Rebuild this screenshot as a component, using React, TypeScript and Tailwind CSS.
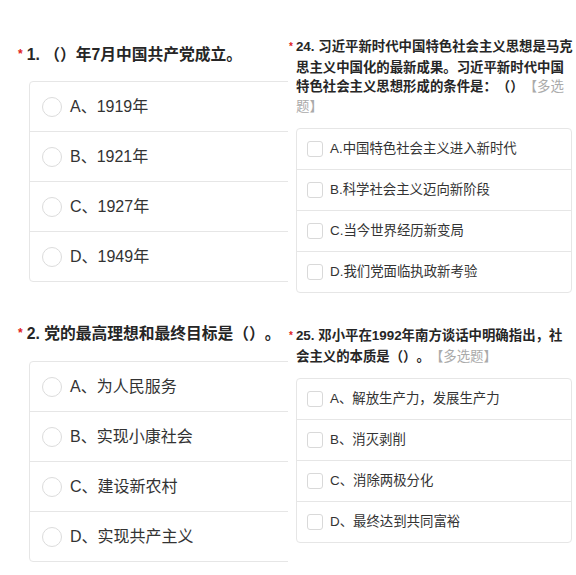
import React from 'react';

const FONT = '"Liberation Sans", "Noto Sans CJK SC", sans-serif';

interface Question {
  no: string;
  title: React.ReactNode;
  options: string[];
}

const left: Question[] = [
  {
    no: '1.',
    title: '（）年7月中国共产党成立。',
    options: ['A、1919年', 'B、1921年', 'C、1927年', 'D、1949年'],
  },
  {
    no: '2.',
    title: '党的最高理想和最终目标是（）。',
    options: ['A、为人民服务', 'B、实现小康社会', 'C、建设新农村', 'D、实现共产主义'],
  },
];

const right: Question[] = [
  {
    no: '24.',
    title: (
      <>
        习近平新时代中国特色社会主义思想是马克思主义中国化的最新成果。习近平新时代中国特色社会主义思想形成的条件是：（）
        <span className="font-normal text-[#aaaaaa]">【多选题】</span>
      </>
    ),
    options: ['A.中国特色社会主义进入新时代', 'B.科学社会主义迈向新阶段', 'C.当今世界经历新变局', 'D.我们党面临执政新考验'],
  },
  {
    no: '25.',
    title: (
      <>
        邓小平在1992年南方谈话中明确指出，社<br />
        会主义的本质是（）。
        <span className="font-normal text-[#aaaaaa]">【多选题】</span>
      </>
    ),
    options: ['A、解放生产力，发展生产力', 'B、消灭剥削', 'C、消除两极分化', 'D、最终达到共同富裕'],
  },
];

function RadioQuestion({ q, first }: { q: Question; first: boolean }) {
  return (
    <div className={first ? '' : 'mt-[40px]'}>
      <div className="pl-[18px] text-[15.75px] leading-[24px] font-bold text-[#262626] whitespace-nowrap">
        <span className="relative -top-[2px] text-[12px] text-[#e02020] mr-[4px]">*</span>
        {q.no} {q.title}
      </div>
      <div className={`${first ? 'mt-[13px]' : 'mt-[14px]'} ml-[29px] w-[320px] rounded-[4px] border border-[#e6e6e6] bg-white`}>
        {q.options.map((o, i) => (
          <div
            key={o}
            className={`flex items-center pl-[12px] ${i > 0 ? 'h-[50px] border-t border-[#e6e6e6]' : 'h-[49px]'}`}
          >
            <span className="h-[20px] w-[20px] shrink-0 rounded-full border border-[#dcdcdc] bg-white" />
            <span className="ml-[8px] text-[16px] text-[#333333]">{o}</span>
          </div>
        ))}
      </div>
    </div>
  );
}

function CheckQuestion({ q, first }: { q: Question; first: boolean }) {
  return (
    <div className={first ? '' : 'mt-[33px]'}>
      <div className="pl-[8px] [text-indent:-7px] text-[13.4px] leading-[19.5px] font-bold text-[#262626]">
        <span className="relative -top-[1px] text-[10px] text-[#e02020] mr-[3px]">*</span>
        {q.no} {q.title}
      </div>
      <div className="mt-[12px] ml-[8px] w-[276px] rounded-[4px] border border-[#e6e6e6] bg-white">
        {q.options.map((o, i) => (
          <div
            key={o}
            className={`flex items-center pl-[10px] ${i > 0 ? 'h-[41px] border-t border-[#e6e6e6]' : 'h-[40px]'}`}
          >
            <span className="h-[16px] w-[16px] shrink-0 rounded-[3px] border border-[#d9d9d9] bg-white" />
            <span className="ml-[7px] text-[13.4px] text-[#333333]">{o}</span>
          </div>
        ))}
      </div>
    </div>
  );
}

export default function App() {
  return (
    <div
      className="flex h-[575px] w-[576px] overflow-hidden bg-white [text-spacing-trim:space-all]"
      style={{ fontFamily: FONT }}
    >
      <div className="w-[288px] shrink-0 overflow-hidden pt-[43px]">
        {left.map((q, i) => (
          <RadioQuestion key={q.no} q={q} first={i === 0} />
        ))}
      </div>
      <div className="w-[288px] shrink-0 bg-white pt-[37px]">
        {right.map((q, i) => (
          <CheckQuestion key={q.no} q={q} first={i === 0} />
        ))}
      </div>
    </div>
  );
}
